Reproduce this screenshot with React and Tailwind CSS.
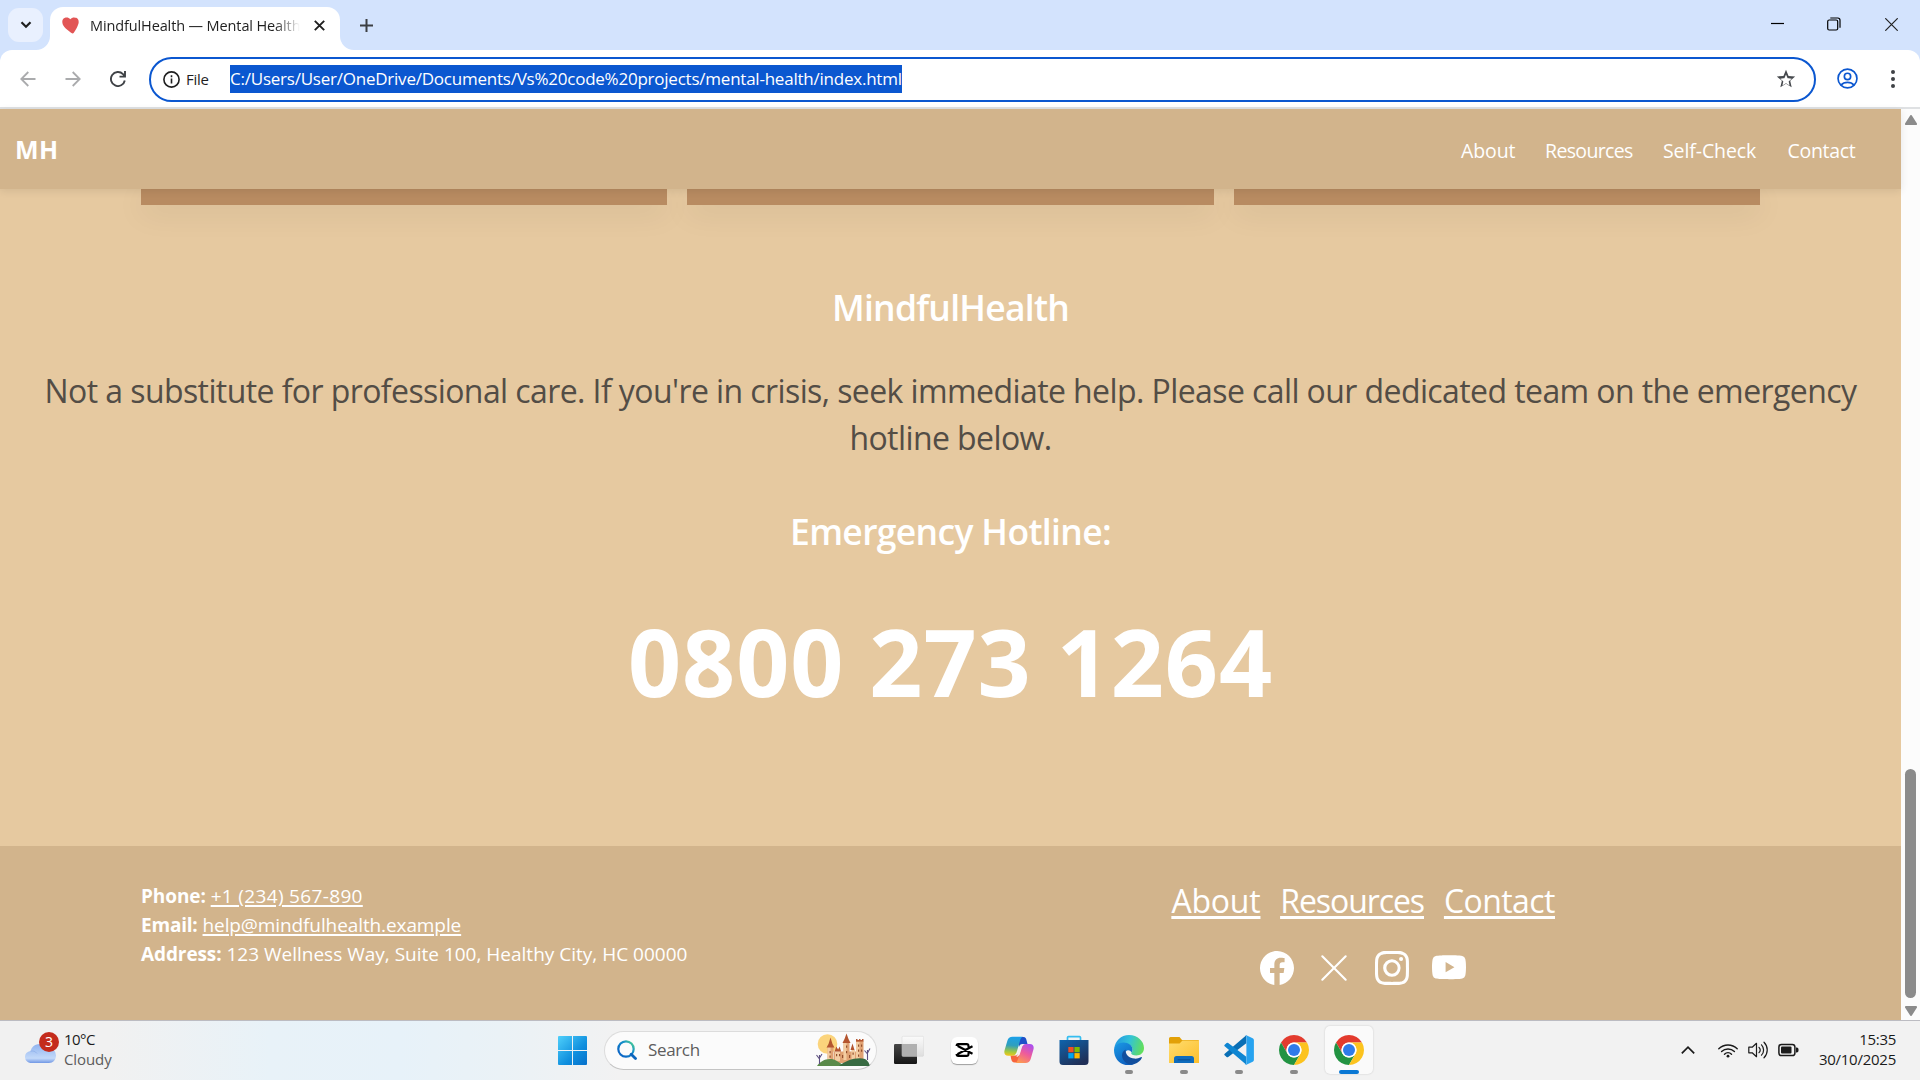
import React from 'react';
import { BsFacebook, BsXLg, BsInstagram, BsYoutube } from 'react-icons/bs';

function ChromeLogo() {
  return (
    <svg viewBox="0 0 48 48" className="size-[30px]">
      <path fill="#e33b2e" d="M24 12H44.78A24 24 0 0 0 3.22 12L13.6 30A12 12 0 0 1 24 12z" />
      <path fill="#229342" d="M13.6 30 3.22 12A24 24 0 0 0 24 48L34.4 30A12 12 0 0 1 13.6 30z" />
      <path fill="#fcc31e" d="M34.4 30 24 48A24 24 0 0 0 44.78 12H24A12 12 0 0 1 34.4 30z" />
      <circle cx="24" cy="24" r="12" fill="#fff" />
      <circle cx="24" cy="24" r="9.6" fill="#2f7bea" />
    </svg>
  );
}

function EdgeLogo() {
  return (
    <svg viewBox="0 0 30 30" className="size-[30px]">
      <defs>
        <linearGradient id="edgeTop" x1="0" y1="0.3" x2="1" y2="0.5">
          <stop offset="0" stopColor="#2196e3" />
          <stop offset="0.5" stopColor="#33c3d6" />
          <stop offset="1" stopColor="#63df5a" />
        </linearGradient>
        <linearGradient id="edgeSide" x1="0" y1="0" x2="0.6" y2="1">
          <stop offset="0" stopColor="#1a9be6" />
          <stop offset="1" stopColor="#0f5fbe" />
        </linearGradient>
      </defs>
      <path fill="url(#edgeTop)" d="M0.3 13.5C1 6 7 0 15 0c8.500 0 15 6.200 15 13 0 4.800-3.600 7.500-7.600 7.500-3.600 0-5.200-1.200-5.200-2.200 0-.8 1.300-1.400 1.300-3.600 0-3.700-3.400-6.200-8-6.200C5.500 8.500 1.800 10.500 0.300 13.500z" />
      <path fill="url(#edgeSide)" d="M0 15c.2-4.200 4.200-7.400 9.500-7.400 5.200 0 9 3 9 7 0 1.300-.5 2.200-1 2.900-1.500-3.500-6.500-3.300-6.500 1.800 0 5 4 9.500 9 10C9 33 0 25.500 0 15z" />
      <path fill="#124f9e" d="M11.500 14.500c-3.500 2-4.500 6.200-2.400 10 2.200 4 7 6 11.400 4.500 3.500-1.100 6-3.300 7.300-6 .4-.9-.3-1.200-1-.8-2 1.100-4 1.600-6.400 1.400-5.400-.4-9.400-4.400-8.900-9.100z" />
    </svg>
  );
}

function CopilotLogo() {
  return (
    <svg viewBox="0 0 30 28" className="h-7 w-[30px]">
      <defs>
        <linearGradient id="copA" x1="0.4" y1="0" x2="0.3" y2="1">
          <stop offset="0" stopColor="#1ba0e8" />
          <stop offset="0.45" stopColor="#2f9fbd" />
          <stop offset="0.8" stopColor="#a6c93c" />
          <stop offset="1" stopColor="#f3c51b" />
        </linearGradient>
        <linearGradient id="copB" x1="0.8" y1="0" x2="0.3" y2="1">
          <stop offset="0" stopColor="#a94ff0" />
          <stop offset="0.5" stopColor="#ee5b9b" />
          <stop offset="1" stopColor="#fd9a52" />
        </linearGradient>
      </defs>
      <path fill="#1d50c9" d="M13 1h6.500c2 0 2.600 1.500 3.100 3.500L23.500 8h-5c-2 0-3 1-3.500 3z" />
      <path fill="#f7643c" d="M17 26.500h-6.500c-2 0-2.800-1.500-3.300-3.500L6.500 19.500H11c2 0 3-1 3.600-3z" />
      <path fill="url(#copA)" d="M8.500 0.800H19c-1.700.6-2.500 2-3 4L13 15c-.8 3-2.200 4.700-5 4.700H4.200C1 19.700-.2 17.500.5 14.500L3.300 5C4.100 2.200 5.800.8 8.500.8z" />
      <path fill="url(#copB)" d="M21.500 27H11c1.700-.6 2.500-2 3-4l3-10.200C17.800 9.800 19.200 8 22 8h3.800c3.200 0 4.400 2.200 3.700 5.200L26.700 23c-.8 2.700-2.500 4-5.200 4z" />
      <path fill="#f3ecf2" d="M17.200 9.500c-1 .8-1.500 1.800-1.900 3.200l-2 6.500c-.3.900-.6 1.300-1.300 1.700 2.300-.2 3.500-1.600 4.200-4l1.500-5c.5-1.700 1.200-2.800 2.800-3.600-1.500.1-2.500.5-3.300 1.200z" />
    </svg>
  );
}

function StoreLogo() {
  return (
    <svg viewBox="0 0 30 30" className="size-[30px]">
      <defs>
        <linearGradient id="store" x1="0" y1="0" x2="0.6" y2="1">
          <stop offset="0" stopColor="#0f64ad" />
          <stop offset="1" stopColor="#203058" />
        </linearGradient>
      </defs>
      <path d="M8.500 6V2.600A1 1 0 0 1 9.500 1.700h11a1 1 0 0 1 1 .9V6" fill="none" stroke="#35bdf0" strokeWidth="1.700" />
      <path fill="url(#store)" d="M.5 5h29v21.500a3.500 3.500 0 0 1-3.500 3.500H4A3.500 3.500 0 0 1 .5 26.500z" />
      <path fill="#f25022" d="M9.300 12h5.300v5.300H9.300z" />
      <path fill="#7fba00" d="M15.400 12h5.300v5.300h-5.300z" />
      <path fill="#00a4ef" d="M9.300 18.100h5.300v5.300H9.300z" />
      <path fill="#ffb900" d="M15.400 18.100h5.300v5.300h-5.300z" />
    </svg>
  );
}

function FolderLogo() {
  return (
    <svg viewBox="0 0 30 28" className="h-7 w-[30px]">
      <defs>
        <linearGradient id="folder" x1="0" y1="0" x2="1" y2="1">
          <stop offset="0" stopColor="#ffdc6e" />
          <stop offset="1" stopColor="#fcbf2c" />
        </linearGradient>
      </defs>
      <path fill="#e2a007" d="M0 2.500A1.500 1.500 0 0 1 1.500 1h9L13 4h16a1 1 0 0 1 1 1v4H0z" />
      <path fill="url(#folder)" d="M0 7.500h10.500L13.500 4.500H30V27H0z" />
      <path fill="#0f6cbd" d="M5 27v-4.500A2.500 2.500 0 0 1 7.500 20h15a2.500 2.500 0 0 1 2.500 2.500V27z" />
      <path d="M9 23.800h12" stroke="#0b4e92" strokeWidth="1" strokeLinecap="round" />
    </svg>
  );
}

function CodeLogo() {
  return (
    <svg viewBox="0 0 30 30" className="size-[30px]">
      <path fill="#0a6fb5" d="M22.300.3 0.700 18.800a1 1 0 0 0 0 1.500l1.900 1.700a1.200 1.200 0 0 0 1.600 0L22.300 8.200z" />
      <path fill="#0f86d2" d="M22.300 29.700.700 11.200a1 1 0 0 1 0-1.500L2.600 8a1.200 1.200 0 0 1 1.600 0L22.300 21.800z" />
      <path fill="#27a3f0" d="M22.300.2 28.700 3.200a2 2 0 0 1 1.200 1.800v20a2 2 0 0 1-1.200 1.800l-6.400 3c-.7.3-1.300.1-1.700-.4.8.7 1.800.1 1.800-.9v-27c0-1-1-1.600-1.800-.9.400-.5 1-.7 1.700-.4z" />
    </svg>
  );
}

function CapCutLogo() {
  return (
    <div className="flex h-[27px] w-[27px] items-center justify-center rounded-[6px] bg-white shadow-[0_1px_1px_rgba(0,0,0,0.35)]">
      <svg viewBox="0 0 18 14" className="h-[14px] w-[18px]" fill="none" stroke="#000" strokeWidth="2.100">
        <path d="M17.500 3.200 3.200 10.700c-.9.500-1.600 1.200-1.600.6V11c0 1 .6 1.900 1.700 1.900h8.400c1.100 0 1.800-.8 1.800-1.900V9.700M17.500 10.800 3.200 3.300c-.9-.5-1.600-1-1.600-.3 0-1 .6-1.900 1.700-1.900h8.400c1.100 0 1.800.8 1.800 1.900v1.300" />
      </svg>
    </div>
  );
}

function TaskViewLogo() {
  return (
    <svg viewBox="0 0 30 30" className="size-[30px]">
      <defs>
        <linearGradient id="tvDark" x1="0" y1="0" x2="0" y2="1">
          <stop offset="0" stopColor="#474747" />
          <stop offset="1" stopColor="#161616" />
        </linearGradient>
        <linearGradient id="tvLight" x1="0" y1="0" x2="0" y2="1">
          <stop offset="0" stopColor="#fbfbfb" />
          <stop offset="1" stopColor="#dedede" />
        </linearGradient>
      </defs>
      <rect x="0" y="9" width="23" height="20" rx="1.200" fill="url(#tvDark)" />
      <rect x="8" y="1.300" width="21.700" height="20" rx="1.200" fill="url(#tvLight)" stroke="#d4d4d4" strokeWidth="0.500" />
      <rect x="8" y="9" width="15" height="12.300" fill="#b0b0b0" />
    </svg>
  );
}

function Castle() {
  return (
    <svg viewBox="0 0 56 34" className="h-[34px] w-14">
      <circle cx="12.500" cy="11" r="9.800" fill="#fbd47c" />
      <path fill="#e0a273" d="M12.500 14h6v16h-6zM19 18.500h24V30H19zM28.500 9h6v18h-6zM41 8h7.500v22H41z" />
      <path fill="#f3cda2" d="M12.500 14h3v13h-3zM20 19h5v9h-5zM28.500 10h3v17h-3zM36.500 17h3.500v12h-3.500zM41 9h3.500v19H41z" />
      <path fill="#b4552f" d="M11.500 14.500 13.500 11l2-6.500 2 6.500 2 3.500zM27.500 10l2-4 2-5.500 2 5.500 2 4zM19.500 18.500l1.800-5 1.800 3 1.500-3 1.500 5zM35.500 17l2-6.500 2 6.500zM41 8.500V6h1.500v1h1.500V6h1.500v1H47V6h1.500v2.500z" />
      <path fill="#94502f" d="M14.500 18h1.200v2.200h-1.200zM14.500 22.500h1.200v2.200h-1.200zM21 21h1.200v2.200H21zM24 21h1.200v2.200H24zM31 12.500h1.200v2.200H31zM31 18h1.200v2.200H31zM37.500 19.500h1.200v2.200h-1.200zM43 11.500h1.200v2.200H43zM46 11.500h1.200v2.200H46zM43 16.500h1.200v2.200H43zM46 16.500h1.200v2.200H46zM43 21.500h1.200v2.200H43zM27 22h1.200v3H27zM34 22h1.200v3H34z" />
      <path fill="#5a8a49" d="M2 33c4-6 12-9 19-5.500l9 5.500z" />
      <path fill="#386b42" d="M24 33c6-5.500 18-9.500 26-7 3 1.500 4.500 4.500 4.500 7z" />
      <path d="M4.500 31v-9M4.500 26l-3-4M4.500 25l2.500-4M52.500 27V17M52.500 21l-3-3.500M52.500 20l2.500-4.500" stroke="#5d5080" strokeWidth="1.100" fill="none" />
    </svg>
  );
}

function TaskButton({ children, running, active }) {
  return (
    <div className="flex h-full w-[55px] items-center justify-center">
      <div className={active
        ? 'relative flex h-12 w-12 items-center justify-center rounded-[5px] bg-[#fafafa] shadow-[0_0_2px_rgba(0,0,0,0.18)]'
        : 'relative flex h-12 w-12 items-center justify-center'}>
        {children}
        {running && <span className="absolute bottom-[0px] left-5 h-1 w-2 rounded-full bg-[#8a8a8a]" />}
        {active && <span className="absolute bottom-[0px] left-[14px] h-1 w-5 rounded-full bg-[#0a78d4]" />}
      </div>
    </div>
  );
}

function TabStrip() {
  return (
    <div className="flex h-[50px] items-end bg-[#d3e3fd]">
      <div className="mb-2 ml-2 flex h-[34px] w-[35px] items-center justify-center rounded-[11px] bg-[#e9f0fe]">
        <svg viewBox="0 0 12 8" className="h-2 w-3" fill="none" stroke="#1f1f1f" strokeWidth="2.200"><path d="M1.500 1.200 6 5.700l4.500-4.500" /></svg>
      </div>
      <div className="relative ml-[7px] flex h-[43px] w-[290px] items-center rounded-t-[13px] bg-white">
        <svg viewBox="0 0 14 14" className="absolute -left-[14px] bottom-0 size-[14px]"><path fill="#fff" d="M14 0v14H0A14 14 0 0 0 14 0z" /></svg>
        <svg viewBox="0 0 14 14" className="absolute -right-[14px] bottom-0 size-[14px]"><path fill="#fff" d="M0 0v14h14A14 14 0 0 1 0 0z" /></svg>
        <svg viewBox="0 0 17 17" className="mb-[7px] ml-[12px] size-[17px]">
          <path fill="#e25555" d="M8.300 2.300C10-.2 13 .3 14.300.8c2.200.9 2.700 3.500 2.200 5.700-.9 3.600-3 6.500-4.700 9.300-.5.8-1.600.9-2.300.3C6.800 13.500 2.300 11 .8 7.400-.3 4.700.4 1.800 2.500 1c2.300-.8 4.300-.4 5.800 1.300z" />
        </svg>
        <div className="mb-[5px] ml-[11px] w-[210px] overflow-hidden whitespace-nowrap text-[14.5px] leading-5 tracking-[-0.12px] text-[#1f1f1f] [mask-image:linear-gradient(to_right,black_88%,transparent_100%)]">
          MindfulHealth — Mental Health
        </div>
        <svg viewBox="0 0 11 11" className="mb-[7px] ml-[14px] size-[11px]" stroke="#1f1f1f" strokeWidth="1.900"><path d="M.8.8l9.400 9.400M10.200.8.8 10.200" /></svg>
      </div>
      <svg viewBox="0 0 13 13" className="mb-[18px] ml-[20px] size-[13px]" stroke="#3c3f43" strokeWidth="2"><path d="M6.500 0v13M0 6.500h13" /></svg>
      <div className="mb-[19px] ml-auto flex items-center pr-[22px] text-black">
        <svg viewBox="0 0 13 13" className="size-[13px]" stroke="currentColor" strokeWidth="1.200"><path d="M0 5.500h13" /></svg>
        <svg viewBox="0 0 14 14" className="ml-[43px] size-[14px]" fill="none" stroke="currentColor" strokeWidth="1.200"><rect x=".7" y="3" width="10" height="10" rx="1.500" /><path d="M3.300 1h7.500a2.200 2.200 0 0 1 2.200 2.200v7.500" /></svg>
        <svg viewBox="0 0 13 13" className="ml-[44px] size-[13px]" stroke="#222" strokeWidth="1.200"><path d="M.3.3l12.400 12.400M12.700.3.3 12.700" /></svg>
      </div>
    </div>
  );
}

function Toolbar() {
  return (
    <div className="h-[59px] bg-[#d3e3fd]">
      <div className="flex h-full items-center rounded-t-[12px] border-b-2 border-[#dfe1e3] bg-white">
        <svg viewBox="0 0 16 16" className="ml-5 size-4" fill="none" stroke="#aaabad" strokeWidth="1.800"><path d="M15.500 8H1.500M8.300 1 1.300 8l7 7" /></svg>
        <svg viewBox="0 0 16 16" className="ml-[29px] size-4" fill="none" stroke="#aaabad" strokeWidth="1.800"><path d="M.5 8h14M7.700 1l7 7-7 7" /></svg>
        <svg viewBox="0 0 16 16" className="ml-[29px] size-4" fill="none" stroke="#3f4246" strokeWidth="1.900"><path d="M14.800 9.500A7 7 0 1 1 13 3.200L15 5.500M15 0v5.600H9.500" /></svg>
        <div className="ml-[23px] mt-px flex h-[45px] w-[1667px] items-center rounded-full border-[2.500px] border-[#0b57d0] bg-white">
          <svg viewBox="0 0 17 17" className="ml-3 size-[17px]" fill="none" stroke="#1f1f1f" strokeWidth="1.600"><circle cx="8.500" cy="8.500" r="7.600" /><path d="M8.500 7.500v5M8.500 4.300v1.900" /></svg>
          <span className="ml-[6px] w-[44px] text-[15px] leading-5 tracking-[-0.3px] text-[#1f1f1f]">File</span>
          <span className="h-7 w-[672px] whitespace-nowrap bg-[#0b57d0] text-[17px] leading-7 tracking-[-0.23px] text-white">
            C:/Users/User/OneDrive/Documents/Vs%20code%20projects/mental-health/index.html
          </span>
          <svg viewBox="0 0 24 24" className="ml-auto mr-[17px] size-[22px]" fill="#46494d"><path d="m12 7.100 1.400 3.200.4.900 1 .1 3.500.3-2.600 2.300-.8.700.2 1 .8 3.400-3-1.800-.9-.5-.9.500-3 1.800.8-3.400.2-1-.8-.7-2.600-2.300 3.500-.3 1-.1.400-.9L12 7.100M12 2 9.200 8.600 2 9.200l5.500 4.700L5.800 21l6.200-3.700 6.200 3.700-1.600-7.100L22 9.200l-7.200-.6L12 2z" /></svg>
        </div>
        <svg viewBox="0 0 20 20" className="ml-[21px] size-[21px]" fill="none" stroke="#0b57d0" strokeWidth="1.600"><circle cx="10" cy="10" r="9" /><circle cx="10" cy="8" r="3" /><path d="M3.800 16.300c3-3.400 9.400-3.400 12.400 0" /></svg>
        <svg viewBox="0 0 4 18" className="ml-[33px] h-[18px] w-1" fill="#3f4246"><circle cx="2" cy="2" r="2" /><circle cx="2" cy="9" r="2" /><circle cx="2" cy="16" r="2" /></svg>
      </div>
    </div>
  );
}

function Scrollbar() {
  return (
    <div className="flex w-[19px] flex-col items-center bg-[#fcfcfc]">
      <svg viewBox="0 0 12 10" className="mt-[6px] h-[10px] w-3"><path fill="#8b8b8b" d="M5 .7a1.200 1.200 0 0 1 2 0l4.800 7.500a1.100 1.100 0 0 1-1 1.800H1.200a1.100 1.100 0 0 1-1-1.800z" /></svg>
      <div className="mt-auto h-[229px] w-[11px] rounded-full bg-[#8b8b8b]" />
      <svg viewBox="0 0 12 10" className="mb-1 mt-2 h-[10px] w-3"><path fill="#8b8b8b" d="M5 9.300a1.200 1.200 0 0 0 2 0l4.800-7.500a1.100 1.100 0 0 0-1-1.800H1.200a1.100 1.100 0 0 0-1 1.800z" /></svg>
    </div>
  );
}

function SiteHeader() {
  return (
    <header className="z-10 flex h-20 items-center bg-[#d2b48c] pl-[15px] text-white shadow-[0_2px_8px_rgba(0,0,0,0.09)]">
      <span className="text-[25px] font-bold leading-8 tracking-[0.4px]">MH</span>
      <nav className="ml-auto mt-[3px] flex text-[19.5px] font-medium leading-6">
        <a className="w-[84px] tracking-[-0.1px]">About</a>
        <a className="w-[118px] tracking-[-0.65px]">Resources</a>
        <a className="w-[124.500px] tracking-[-0.1px]">Self-Check</a>
        <a className="w-[113.500px] tracking-[-0.3px]">Contact</a>
      </nav>
    </header>
  );
}

function CrisisSection() {
  return (
    <main className="flex h-[657px] flex-col bg-[#e6c9a0] text-center">
      <div className="grid h-4 grid-cols-3 gap-5 px-[141px]">
        <div className="bg-[#b88b61] shadow-[0_8px_30px_rgba(0,0,0,0.08)]" />
        <div className="bg-[#b88b61] shadow-[0_8px_30px_rgba(0,0,0,0.08)]" />
        <div className="bg-[#b88b61] shadow-[0_8px_30px_rgba(0,0,0,0.08)]" />
      </div>
      <h2 className="mt-[78px] text-[35.500px] font-semibold leading-[48px] tracking-[-0.75px] text-white">MindfulHealth</h2>
      <p className="mt-[36px] text-[32px] leading-[47px] tracking-[-0.59px] text-[#534d46]">
        Not a substitute for professional care. If you're in crisis, seek immediate help. Please call our dedicated team on the emergency<br />
        hotline below.
      </p>
      <h3 className="mt-[46px] text-[35.500px] font-semibold leading-[48px] tracking-[-0.66px] text-white">Emergency Hotline:</h3>
      <p className="mt-[46px] text-[93px] font-bold leading-[120px] tracking-[0.9px] text-white">0800 273 1264</p>
    </main>
  );
}

function SiteFooter() {
  return (
    <footer className="grid flex-1 grid-cols-2 gap-8 bg-[#d2b48c] px-[141px] text-white">
      <div className="pt-[36px] text-[19px] leading-[29px]">
        <p><b className="tracking-[-0.1px]">Phone:</b> <a className="tracking-[0.34px] underline decoration-2 underline-offset-2">+1 (234) 567-890</a></p>
        <p><b className="tracking-[-0.2px]">Email:</b> <a className="tracking-[-0.1px] underline decoration-2 underline-offset-2">help@mindfulhealth.example</a></p>
        <p><b className="tracking-[-0.1px]">Address:</b> 123 Wellness Way, Suite 100, Healthy City, HC 00000</p>
      </div>
      <div className="flex flex-col items-center pt-[31px]">
        <div className="flex gap-5 text-[32px] leading-[48px] underline decoration-[3px] underline-offset-[3px]">
          <a className="tracking-[-0.28px]">About</a>
          <a className="tracking-[-1.09px]">Resources</a>
          <a className="tracking-[-0.57px]">Contact</a>
        </div>
        <div className="mt-[26px] flex gap-[23.500px] pr-px text-[34px]">
          <BsFacebook /><BsXLg /><BsInstagram /><BsYoutube />
        </div>
      </div>
    </footer>
  );
}

function Taskbar() {
  return (
    <div className="flex h-[60px] items-center border-t border-[#bcbcc2] bg-[linear-gradient(to_right,#f1f1f1_0px,#f1f1f1_110px,#e8f2f8_270px,#e7f2f9_400px,#eaf2f6_500px,#f2f2f2_620px)] pb-px">
      <div className="flex w-[558px] items-center pl-[25px]">
        <div className="relative mb-[5px] h-[31px] w-[35px]">
          <svg viewBox="0 0 31 21" className="absolute bottom-[0px] left-[0px] h-[21px] w-[31px]">
            <defs><linearGradient id="cloud" x1="0" y1="0" x2="0" y2="1"><stop offset="0" stopColor="#8fb3ef" /><stop offset="0.75" stopColor="#c3d9f9" /><stop offset="1" stopColor="#7097e4" /></linearGradient></defs>
            <path fill="url(#cloud)" d="M6.500 21A6 6 0 0 1 5.500 9 9.500 9.500 0 0 1 22 5.500a8 8 0 0 1 9 8C31 18 28 21 24 21z" />
            <path fill="none" stroke="#8fb0ea" strokeWidth="0.800" d="M5.500 9.200c2.500-.6 4.800 0 6.500 2.300" />
          </svg>
          <span className="absolute top-[0px] left-[14px] flex size-5 items-center justify-center rounded-full bg-[#c42b1c] text-[14px] leading-5 text-white">3</span>
        </div>
        <div className="mb-[3px] ml-1 text-[15px] leading-5">
          <div className="tracking-[-0.55px] text-[#1b1b1b]">10°C</div>
          <div className="tracking-[-0.1px] text-[#5c5c5c]">Cloudy</div>
        </div>
      </div>
      <svg viewBox="0 0 29 29" className="size-[29px]">
        <defs><linearGradient id="win" x1="0" y1="0" x2="1" y2="1"><stop offset="0" stopColor="#4fd0fb" /><stop offset="0.6" stopColor="#0f8fde" /><stop offset="1" stopColor="#0670ca" /></linearGradient></defs>
        <path fill="url(#win)" d="M1 0h13v14H0V1a1 1 0 0 1 1-1zM15 0h13a1 1 0 0 1 1 1v13H15zM0 15h14v14H1a1 1 0 0 1-1-1zM15 15h14v13a1 1 0 0 1-1 1H15z" />
      </svg>
      <div className="ml-[17px] flex h-[39px] w-[273px] items-center rounded-full border border-[#dcdcdc] border-b-[#c4c4c4] bg-[#fbfbfb]">
        <svg viewBox="0 0 20 20" className="ml-3 size-5" fill="none">
          <defs><linearGradient id="lens" x1="0" y1="1" x2="1" y2="0"><stop offset="0.2" stopColor="#0c69c6" /><stop offset="0.65" stopColor="#1591c9" /><stop offset="1" stopColor="#58dc84" /></linearGradient></defs>
          <circle cx="9" cy="9" r="7.700" stroke="url(#lens)" strokeWidth="2.200" />
          <path d="m14.200 14.200 4.300 4.300" stroke="#0c65bd" strokeWidth="2.800" strokeLinecap="round" />
        </svg>
        <span className="ml-[11px] text-[17px] leading-6 tracking-[-0.35px] text-[#5d5d5d]">Search</span>
        <div className="ml-auto mr-[5px]"><Castle /></div>
      </div>
      <div className="ml-[4.500px] flex h-full">
        <TaskButton><TaskViewLogo /></TaskButton>
        <TaskButton><CapCutLogo /></TaskButton>
        <TaskButton><CopilotLogo /></TaskButton>
        <TaskButton><StoreLogo /></TaskButton>
        <TaskButton running><EdgeLogo /></TaskButton>
        <TaskButton running><FolderLogo /></TaskButton>
        <TaskButton running><CodeLogo /></TaskButton>
        <TaskButton running><ChromeLogo /></TaskButton>
        <TaskButton active><ChromeLogo /></TaskButton>
      </div>
      <div className="ml-auto flex items-center pr-6 text-[#1b1b1b]">
        <svg viewBox="0 0 14 8" className="h-2 w-[14px]" fill="none" stroke="currentColor" strokeWidth="1.700"><path d="M.8 7.300 7 1.200l6.200 6.100" /></svg>
        <svg viewBox="0 0 20 15" className="ml-[23px] h-[15px] w-5" fill="none" stroke="currentColor" strokeWidth="1.400" strokeLinecap="round"><path d="M.8 5.800a13 13 0 0 1 18.400 0M3.600 8.600a9 9 0 0 1 12.800 0M6.500 11.200a5 5 0 0 1 7 0" /><circle cx="10" cy="13.200" r="1.400" fill="currentColor" stroke="none" /></svg>
        <svg viewBox="0 0 20 18" className="ml-[10px] h-[18px] w-5" fill="none" stroke="currentColor" strokeWidth="1.200" strokeLinecap="round" strokeLinejoin="round"><path d="M.8 6.200h3.400L8.500 2.300v13.400l-4.300-3.900H.8zM11 6.300a4 4 0 0 1 0 5.400M13.500 3.800a7.500 7.500 0 0 1 0 10.400M16 1.200a11 11 0 0 1 0 15.600" /></svg>
        <svg viewBox="0 0 21 14" className="ml-[10px] h-[14px] w-[21px]"><rect x=".9" y="1.400" width="16" height="11.200" rx="2.600" fill="none" stroke="currentColor" strokeWidth="1.500" /><rect x="3" y="3.500" width="10.500" height="7" rx="1" fill="currentColor" /><path fill="currentColor" d="M18 4.500h.8a1.700 1.700 0 0 1 1.700 1.700v1.600a1.700 1.700 0 0 1-1.700 1.700H18z" /></svg>
        <div className="mb-[3px] ml-[20px] text-right text-[15px] leading-5">
          <div className="tracking-[-0.3px]">15:35</div>
          <div className="tracking-[-0.25px]">30/10/2025</div>
        </div>
      </div>
    </div>
  );
}

export default function App() {
  return (
    <div className="flex h-[1080px] w-[1920px] flex-col overflow-hidden font-['Open_Sans','Noto_Sans',sans-serif]">
      <TabStrip />
      <Toolbar />
      <div className="flex h-[911px]">
        <div className="flex w-[1901px] flex-col">
          <SiteHeader />
          <CrisisSection />
          <SiteFooter />
        </div>
        <Scrollbar />
      </div>
      <Taskbar />
    </div>
  );
}
